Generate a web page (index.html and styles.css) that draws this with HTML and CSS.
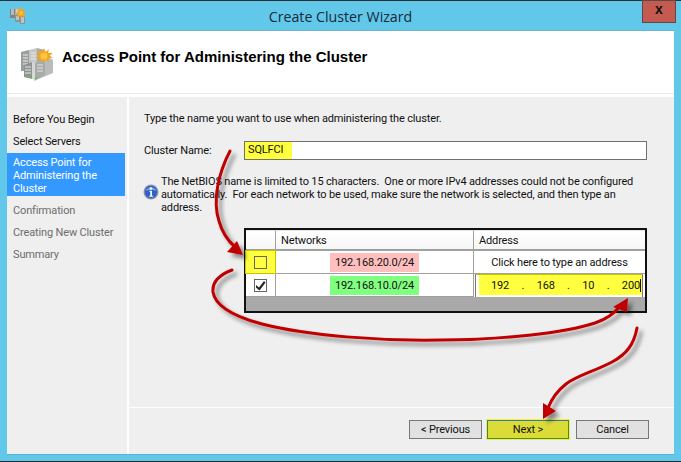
FILE: index.html
```html
<!DOCTYPE html>
<html lang="en">
<head>
<meta charset="utf-8">
<title>Create Cluster Wizard</title>
<link rel="stylesheet" href="styles.css">
</head>
<body>
<svg class="defs" width="0" height="0" aria-hidden="true">
  <symbol id="servers" viewBox="0 0 34 34">
    <path d="M25 8 L33 13 L33 26 L14 34 L14 20Z" fill="#b9bdb9"/>
    <path d="M1 5 L9 3 L9 24 L1 24Z" fill="#9a9e9c"/>
    <path d="M9 3 L17 1 L17 20 L9 22Z" fill="#c4c7c5"/>
    <path d="M17 1 L25 3 L25 16 L17 20Z" fill="#a9acaa"/>
    <path d="M3 8h5M3 11h5M3 14h5M3 17h5M11 6h5M11 9h5M11 12h5" stroke="#eceeec" stroke-width="1.2"/>
    <path d="M4 18 L12 15 L12 32 L4 30Z" fill="#8f9391"/>
    <path d="M12 15 L15 16 L15 32 L12 32Z" fill="#d6d8d6"/>
    <path d="M15 16 L25 14 L25 28 L15 33Z" fill="#a6aaa8"/>
    <path d="M5 20h6M5 23h6M5 26h6M17 18h6M17 21h6M17 24h6" stroke="#e4e6e4" stroke-width="1.2"/>
    <rect x="7" y="29" width="2" height="2" fill="#59c84b"/>
    <rect x="15" y="30" width="2" height="2" fill="#59c84b"/>
    <path d="M24 1 L25.5 5 L29 2 L28 6 L33 6 L29.5 8.5 L33 11 L28.5 11 L29 15 L25.5 12.5 L24 17 L22.5 12.5 L19 15 L19.5 11 L15.5 10.5 L19 8.5 L15.5 6 L20 6 L19 2 L22.5 5Z" fill="#f5a41c"/>
    <circle cx="24" cy="9" r="3.6" fill="#fdc63c"/>
  </symbol>
  <symbol id="servers-small" viewBox="0 0 17 17">
    <path d="M1 2h5v9H1z" fill="#7f8583"/>
    <path d="M6 1h5v8H6z" fill="#aab0ae"/>
    <path d="M2 3h3M2 5h3M2 7h3M7 3h3M7 5h3" stroke="#f0f2f0"/>
    <path d="M6 8h5v7H6zM11 9h5v8h-5z" fill="#8d9391"/>
    <path d="M7 10h3M7 12h3M12 11h3M12 13h3M12 15h3" stroke="#f0f2f0"/>
    <path d="M12 0 L13 3 L16 2 L15 5 L17 6 L15 7 L16 10 L13 9 L12 11 L11 9 L8 10 L9 7 L7 6 L9 5 L8 2 L11 3Z" fill="#f5a41c"/>
    <circle cx="12" cy="6" r="2" fill="#fdc63c"/>
  </symbol>
</svg>

<div class="window">
  <header class="titlebar">
    <svg class="app-icon"><use href="#servers-small"/></svg>
    <h1 class="window-title">Create Cluster Wizard</h1>
  </header>
  <button class="close" type="button">x</button>

  <div class="client">
    <div class="banner">
      <svg class="banner-icon"><use href="#servers"/></svg>
      <h2 class="banner-title">Access Point for Administering the Cluster</h2>
    </div>
    <div class="body">
      <nav class="steps">
        <div class="step">Before You Begin</div>
        <div class="step">Select Servers</div>
        <div class="step step-active">Access Point for Administering the Cluster</div>
        <div class="step step-off">Confirmation</div>
        <div class="step step-off">Creating New Cluster</div>
        <div class="step step-off">Summary</div>
      </nav>
      <main class="main">
        <div class="content">
          <p class="intro">Type the name you want to use when administering the cluster.</p>
          <div class="name-row">
            <span class="name-label">Cluster Name:</span>
            <div class="name-input"><span class="mark">SQLFCI</span></div>
          </div>
          <div class="note">
            <svg class="info" viewBox="0 0 16 16">
              <circle cx="8" cy="8" r="7.5" fill="#8d96a6"/>
              <circle cx="8" cy="8" r="6.2" fill="#2f62c4"/>
              <path d="M2.5 7 A6 6 0 0 1 13.5 7 Q8 4.5 2.5 7Z" fill="#7ea6ea"/>
              <circle cx="8" cy="4.5" r="1.3" fill="#fff"/>
              <path d="M6.4 6.8h2.6v5h1.1v1H6.2v-1h1.1v-4H6.4z" fill="#fff"/>
            </svg>
            <p class="note-text">The NetBIOS name is limited to 15 characters.&nbsp; One or more IPv4 addresses could not be configured automatically.&nbsp; For each network to be used, make sure the network is selected, and then type an address.</p>
          </div>
          <div class="grid">
            <div class="cell head c-check"></div>
            <div class="cell head c-net">Networks</div>
            <div class="cell head c-addr">Address</div>

            <div class="cell c-check row1 check-mark"><span class="box"></span></div>
            <div class="cell c-net row1 center"><span class="net net-red">192.168.20.0/24</span></div>
            <div class="cell c-addr row1 center">Click here to type an address</div>

            <div class="cell c-check row2">
              <span class="box">
                <svg viewBox="0 0 11 11"><path d="M1 5 L4 7.5 L9 1 L10.5 2.5 L4.5 10.5 L1 7.5Z" fill="#222"/></svg>
              </span>
            </div>
            <div class="cell c-net row2 center"><span class="net net-green">192.168.10.0/24</span></div>
            <div class="cell c-addr row2 ip-cell">
              <div class="ip">
                <span>192</span><span>.</span><span>168</span><span>.</span><span>10</span><span>.</span><span class="caret">200</span>
              </div>
            </div>
            <div class="grid-empty"></div>
          </div>
        </div>
        <footer class="footer">
          <button class="btn" type="button">&lt; Previous</button>
          <button class="btn btn-next" type="button">Next &gt;</button>
          <button class="btn btn-cancel" type="button">Cancel</button>
        </footer>
      </main>
    </div>
  </div>

  <svg class="arrows" viewBox="0 0 681 462">
    <defs>
      <filter id="shadow" x="-20%" y="-20%" width="140%" height="140%">
        <feDropShadow dx="4" dy="4" stdDeviation="2" flood-color="#000" flood-opacity="0.45"/>
      </filter>
    </defs>
    <g filter="url(#shadow)">
      <path d="M230 151 C219 172 212 200 219 221 C222 232 227 240 235 247" class="arrow-line"/>
      <path d="M227 252 L237 241 L243 255Z" class="arrow-head"/>
    </g>
    <g filter="url(#shadow)">
      <path d="M232 270 C219 275 212 282 213 292 C215 305 232 316 262 324 C310 336 380 341 440 340 C500 340 565 333 595 323 C607 319 614 314 620 306" class="arrow-line"/>
      <path d="M613 307 L628 298 L627 312Z" class="arrow-head"/>
    </g>
    <g filter="url(#shadow)">
      <path d="M637 328 C634 344 627 354 612 362 C595 371 576 376 566 384 C557 391 552 398 548 408" class="arrow-line"/>
      <path d="M543 403 L556 411 L543 419Z" class="arrow-head"/>
    </g>
  </svg>
</div>
</body>
</html>
```
FILE: styles.css
```css
* { box-sizing: border-box; }
html, body { margin: 0; padding: 0; }
body {
  width: 681px;
  height: 462px;
  overflow: hidden;
  font-family: Roboto, "Open Sans", sans-serif;
  font-size: 11px;
  letter-spacing: -0.15px;
  color: #111;
}
.defs { position: absolute; }
.window {
  position: relative;
  width: 681px;
  height: 462px;
  display: flex;
  flex-direction: column;
  background: #62c8ea;
  border-top: 1px solid #2c3034;
  border-bottom: 1px solid #1c2a30;
}
.titlebar {
  height: 30px;
  flex: none;
  display: flex;
  align-items: center;
  justify-content: center;
}
.app-icon {
  position: absolute;
  left: 9px;
  top: 6px;
  width: 17px;
  height: 17px;
}
.window-title {
  margin: 0;
  font-family: "Open Sans", sans-serif;
  font-size: 14.2px;
  font-weight: 400;
  letter-spacing: 0;
  color: #15283a;
}
.close {
  position: absolute;
  right: 5px;
  top: -1px;
  width: 34px;
  height: 23px;
  padding: 0 0 5px;
  background: #c45a50;
  border: 1px solid #5c4a48;
  color: #111;
  font-family: "Liberation Sans", sans-serif;
  font-size: 14px;
  font-weight: 700;
  line-height: 14px;
}
.client {
  flex: 1;
  margin: 0 7px 7px;
  display: flex;
  flex-direction: column;
  background: #fff;
  box-shadow: 0 -1px 0 #6fb3cf, 0 1px 0 #5bb0cf;
}
.banner {
  height: 66px;
  flex: none;
  display: flex;
  align-items: center;
  border-bottom: 3px solid #fff;
  box-shadow: inset 0 -1px 0 #e8e8e8;
  padding: 0 0 13px 13px;
}
.banner-icon {
  width: 34px;
  height: 34px;
  margin: 15px 8px 0 0;
}
.banner-title {
  margin: 0;
  font-family: "Liberation Sans", sans-serif;
  font-size: 15px;
  font-weight: 700;
  letter-spacing: 0;
  color: #000;
}
.body {
  flex: 1;
  display: flex;
  gap: 2px;
}
.steps {
  width: 120px;
  flex: none;
  background: #efefef;
  padding-top: 12px;
}
.step {
  padding: 4px 6px 5px;
  line-height: 13px;
}
.step-active {
  background: #3399ff;
  color: #fff;
  width: 118px;
  margin: 0 0 4px;
  padding: 3px 6px 1px;
}
.step-off { color: #6d6d6d; }
.main {
  flex: 1;
  min-width: 0;
  display: flex;
  flex-direction: column;
  background: #efefef;
}
.content {
  flex: 1;
  padding: 15px 27px 0 15px;
}
.intro {
  margin: 0 0 16px;
  line-height: 13px;
}
.name-row {
  display: flex;
  align-items: center;
}
.name-label {
  width: 100px;
  flex: none;
}
.name-input {
  width: 403px;
  height: 19px;
  border: 1px solid #707070;
  background: #fff;
  line-height: 16px;
  display: flex;
}
.mark {
  background: #ffff3c;
  padding: 0 3px;
  width: 47px;
}
.note {
  position: relative;
  padding-left: 17px;
  margin-top: 15px;
}
.info {
  position: absolute;
  left: -1px;
  top: 9px;
  width: 16px;
  height: 16px;
}
.note-text {
  margin: 0;
  line-height: 13px;
  width: 484px;
}
.grid {
  width: 403px;
  height: 85px;
  margin: 14px 0 0 100px;
  border: 2px solid #111;
  background: #fff;
  display: grid;
  grid-template-columns: 30px 198px 1fr;
  grid-template-rows: 21px 23px 23px 1fr;
}
.cell {
  border-right: 1px solid #a0a0a0;
  border-bottom: 1px solid #a0a0a0;
  display: flex;
  align-items: center;
}
.head {
  border-top: 1px solid #e5e5e5;
  border-bottom: 2px solid #a0a0a0;
  padding-left: 5px;
  background: linear-gradient(#fff, #f6f6f6);
}
.c-addr { border-right: 0; }
.center { justify-content: center; }
.c-check { justify-content: center; }
.check-mark {
  background: #ffff40;
  box-shadow: inset 0 0 0 1px #c4c400;
  border: 0;
  margin: -1px 0 0 -1px;
}
.box {
  width: 13px;
  height: 13px;
  border: 1px solid #666;
  display: block;
}
.row2 .box { background: #fff; }
.box svg { display: block; width: 11px; height: 11px; }
.net {
  padding: 2px 5px;
  line-height: 15px;
}
.net-red { background: #ffbfbf; }
.net-green { background: #80ff80; }
.ip-cell {
  border: 1px solid #777;
  border-top: 1px solid #c4c400;
  margin: 0 2px 0 1px;
  align-items: stretch;
  border-bottom: 0;
}
.ip {
  flex: 1;
  margin: 0 0 2px 3px;
  background: #ffff40;
  display: flex;
  justify-content: space-between;
  align-items: center;
  padding: 0 1px 0 12px;
}
.caret { border-right: 1px solid #111; }
.grid-empty {
  grid-column: 1 / -1;
  background: #a9a9a9;
}
.footer {
  flex: none;
  height: 47px;
  border-top: 1px solid #fff;
  display: flex;
  justify-content: flex-end;
  align-items: flex-start;
  padding: 12px 25px 0 0;
  gap: 7px;
}
.btn {
  width: 73px;
  height: 19px;
  padding: 0;
  background: #e1e1e1;
  border: 1px solid #777;
  font: inherit;
  letter-spacing: inherit;
  color: #111;
}
.btn-next {
  width: 82px;
  background: #dcdc38;
  border-color: #3a7d8c #4c8a30 #4c8a30 #3a7d8c;
  box-shadow: 0 0 0 1px #f0f040;
  margin-left: -2px;
}
.arrows {
  position: absolute;
  left: 0;
  top: -1px;
  width: 681px;
  height: 462px;
  pointer-events: none;
}
.arrow-line {
  fill: none;
  stroke: #c00000;
  stroke-width: 3;
  stroke-linecap: round;
}
.arrow-head { fill: #c00000; }
```
